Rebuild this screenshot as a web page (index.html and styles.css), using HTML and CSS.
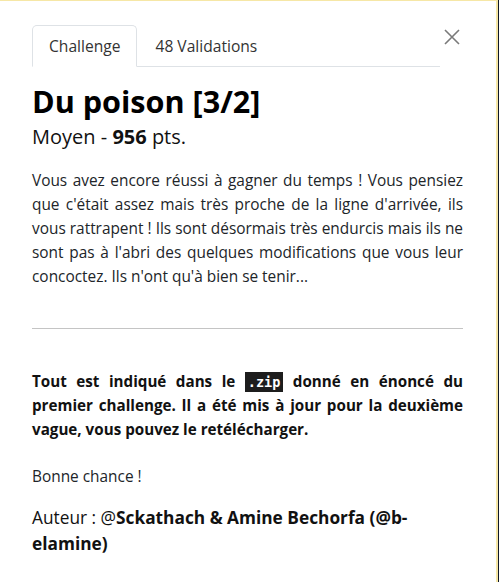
FILE: index.html
```html
<!DOCTYPE html>
<html lang="fr">
<head>
<meta charset="utf-8">
<title>Du poison [3/2]</title>
<link rel="stylesheet" href="styles.css">
</head>
<body>
<div class="modal">
  <div class="header">
    <ul class="tabs">
      <li class="tab active">Challenge</li>
      <li class="tab">48 Validations</li>
    </ul>
    <button class="close" aria-label="Fermer">
      <svg width="16" height="16" viewBox="0 0 16 16"><path d="M1 1L15 15M15 1L1 15" stroke="#7a7a7a" stroke-width="1.6" fill="none"/></svg>
    </button>
  </div>
  <h2 class="title">Du poison [3/2]</h2>
  <div class="sub">Moyen - <b>956</b> pts.</div>
  <p class="desc">Vous avez encore réussi à gagner du temps ! Vous pensiez que c'était assez mais très proche de la ligne d'arrivée, ils vous rattrapent ! Ils sont désormais très endurcis mais ils ne sont pas à l'abri des quelques modifications que vous leur concoctez. Ils n'ont qu'à bien se tenir...</p>
  <hr class="sep">
  <p class="note"><span>Tout est indiqué dans le </span><code class="code">.zip</code><span> donné en énoncé du</span> <span>premier challenge. Il a été mis à jour pour la deuxième vague, vous pouvez le retélécharger.</span></p>
  <p class="luck">Bonne chance !</p>
  <p class="author"><span>Auteur : @</span><b>Sckathach &amp; Amine Bechorfa (@b-</b><b>elamine)</b></p>
</div>
</body>
</html>
```
FILE: styles.css
```css
* { box-sizing: border-box; }
html, body { margin: 0; padding: 0; }
body {
  background: #0f1827;
  font-family: "Open Sans", sans-serif;
  color: #212529;
  overflow: hidden;
}
.modal {
  width: 498px;
  min-height: 600px;
  background: #fff;
  border-top: 1px solid #f6e7a6;
  border-right: 2px solid #f6e7a6;
  padding: 24px 33px 0 32px;
}
.header {
  display: flex;
  align-items: flex-start;
}
.tabs {
  flex: 1;
  display: flex;
  list-style: none;
  margin: 0;
  padding: 0;
  border-bottom: 1px solid #dee2e6;
}
.tab {
  font-size: 15.6px;
  line-height: 24px;
  padding: 8px 16px;
  border: 1px solid transparent;
  border-top-left-radius: 5px;
  border-top-right-radius: 5px;
  margin-bottom: -1px;
  color: #333;
}
.tab.active {
  border-color: #dee2e6 #dee2e6 #fff;
  background: #fff;
}
.tab + .tab { padding-left: 17px; }
.close {
  width: 23px;
  height: 16px;
  margin-top: 4px;
  padding: 0;
  border: 0;
  background: none;
  display: flex;
  justify-content: center;
}
.title {
  margin: 16px 0 0;
  font-size: 30.6px;
  line-height: 37px;
  font-weight: 700;
  color: #000;
}
.sub {
  margin-top: 5px;
  font-size: 20px;
  line-height: 24px;
  color: #111;
}
.desc {
  margin: 20px 0 0;
  font-size: 15.4px;
  line-height: 24px;
  text-align: justify;
}
.sep {
  margin: 39px 0 0;
  border: 0;
  border-top: 1px solid #c4c4c4;
  height: 0;
}
.note {
  margin: 40px 0 0;
  font-size: 15.2px;
  line-height: 24px;
  font-weight: 700;
  text-align: justify;
  color: #111;
}
.code {
  display: inline-block;
  font-family: "DejaVu Sans Mono", monospace;
  font-size: 13.5px;
  line-height: 20px;
  font-weight: 700;
  background: #1d1d1d;
  color: #fff;
  padding: 0 3px;
}
.luck {
  margin: 24px 0 0;
  font-size: 15.4px;
  line-height: 24px;
}
.author {
  margin: 16px 0 0;
  font-size: 17.3px;
  line-height: 26px;
  color: #111;
}
```
